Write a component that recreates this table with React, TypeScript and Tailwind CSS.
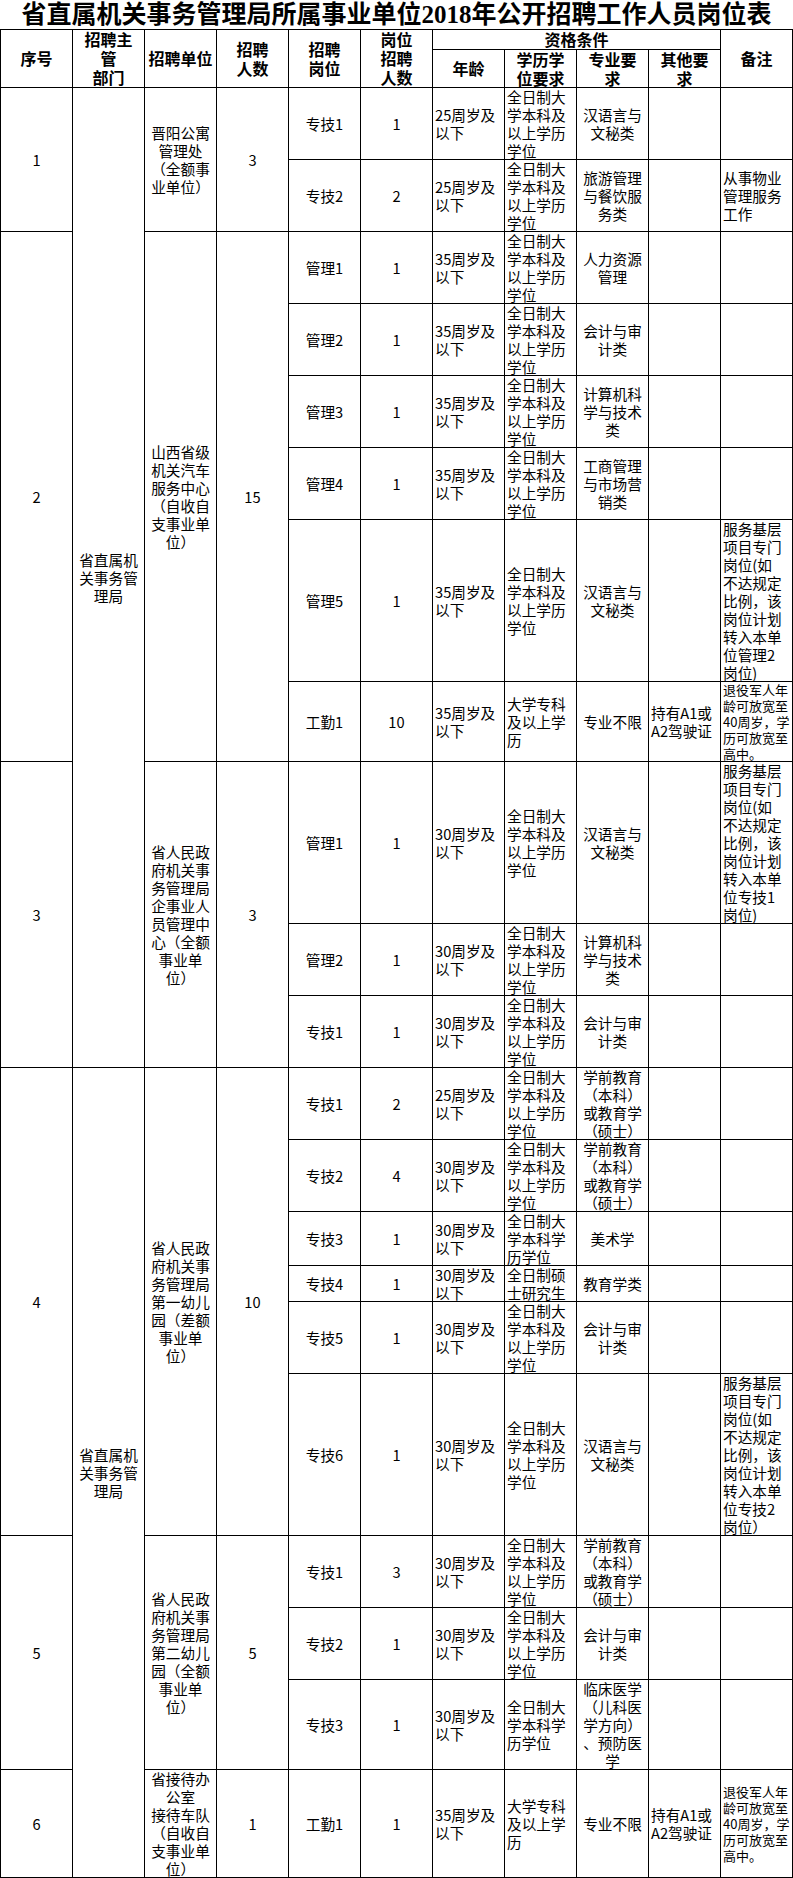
import React from 'react';

type Post = {
  name: string;
  count: string;
  age: string;
  edu: string;
  major: string;
  other?: string;
  note?: string;
  noteSmall?: boolean;
};

type Group = {
  no: string;
  dept?: number;
  unit: string;
  total: string;
  posts: Post[];
};

const AGE25 = '25周岁及\n以下';
const AGE30 = '30周岁及\n以下';
const AGE35 = '35周岁及\n以下';
const EDU = '全日制大\n学本科及\n以上学历\n学位';
const EDU_BK = '全日制大\n学本科学\n历学位';
const EDU_ZK = '大学专科\n及以上学\n历';
const PRESCHOOL = '学前教育\n（本科）\n或教育学\n（硕士）';
const DRIVER = '持有A1或\nA2驾驶证';
const VETERAN = '退役军人年\n龄可放宽至\n40周岁，学\n历可放宽至\n高中。';
const grassroots = (tail: string, close: string) =>
  `服务基层\n项目专门\n岗位(如\n不达规定\n比例，该\n岗位计划\n转入本单\n${tail}\n岗位${close}`;

const DEPT = '省直属机\n关事务管\n理局';

const GROUPS: Group[] = [
  {
    no: '1', dept: 11, unit: '晋阳公寓\n管理处\n（全额事\n业单位）', total: '3',
    posts: [
      { name: '专技1', count: '1', age: AGE25, edu: EDU, major: '汉语言与\n文秘类' },
      { name: '专技2', count: '2', age: AGE25, edu: EDU, major: '旅游管理\n与餐饮服\n务类', note: '从事物业\n管理服务\n工作' },
    ],
  },
  {
    no: '2', unit: '山西省级\n机关汽车\n服务中心\n（自收自\n支事业单\n位）', total: '15',
    posts: [
      { name: '管理1', count: '1', age: AGE35, edu: EDU, major: '人力资源\n管理' },
      { name: '管理2', count: '1', age: AGE35, edu: EDU, major: '会计与审\n计类' },
      { name: '管理3', count: '1', age: AGE35, edu: EDU, major: '计算机科\n学与技术\n类' },
      { name: '管理4', count: '1', age: AGE35, edu: EDU, major: '工商管理\n与市场营\n销类' },
      { name: '管理5', count: '1', age: AGE35, edu: EDU, major: '汉语言与\n文秘类', note: grassroots('位管理2', ')') },
      { name: '工勤1', count: '10', age: AGE35, edu: EDU_ZK, major: '专业不限', other: DRIVER, note: VETERAN, noteSmall: true },
    ],
  },
  {
    no: '3', unit: '省人民政\n府机关事\n务管理局\n企事业人\n员管理中\n心（全额\n事业单\n位）', total: '3',
    posts: [
      { name: '管理1', count: '1', age: AGE30, edu: EDU, major: '汉语言与\n文秘类', note: grassroots('位专技1', ')') },
      { name: '管理2', count: '1', age: AGE30, edu: EDU, major: '计算机科\n学与技术\n类' },
      { name: '专技1', count: '1', age: AGE30, edu: EDU, major: '会计与审\n计类' },
    ],
  },
  {
    no: '4', dept: 10, unit: '省人民政\n府机关事\n务管理局\n第一幼儿\n园（差额\n事业单\n位）', total: '10',
    posts: [
      { name: '专技1', count: '2', age: AGE25, edu: EDU, major: PRESCHOOL },
      { name: '专技2', count: '4', age: AGE30, edu: EDU, major: PRESCHOOL },
      { name: '专技3', count: '1', age: AGE30, edu: EDU_BK, major: '美术学' },
      { name: '专技4', count: '1', age: AGE30, edu: '全日制硕\n士研究生', major: '教育学类' },
      { name: '专技5', count: '1', age: AGE30, edu: EDU, major: '会计与审\n计类' },
      { name: '专技6', count: '1', age: AGE30, edu: EDU, major: '汉语言与\n文秘类', note: grassroots('位专技2', '）') },
    ],
  },
  {
    no: '5', unit: '省人民政\n府机关事\n务管理局\n第二幼儿\n园（全额\n事业单\n位）', total: '5',
    posts: [
      { name: '专技1', count: '3', age: AGE30, edu: EDU, major: PRESCHOOL },
      { name: '专技2', count: '1', age: AGE30, edu: EDU, major: '会计与审\n计类' },
      { name: '专技3', count: '1', age: AGE30, edu: EDU_BK, major: '临床医学\n（儿科医\n学方向）\n、预防医\n学' },
    ],
  },
  {
    no: '6', unit: '省接待办\n公室\n接待车队\n（自收自\n支事业单\n位）', total: '1',
    posts: [
      { name: '工勤1', count: '1', age: AGE35, edu: EDU_ZK, major: '专业不限', other: DRIVER, note: VETERAN, noteSmall: true },
    ],
  },
];

// spans must be written out in full for tailwind
const ROW_SPAN: Record<number, string> = {
  1: 'row-span-1',
  2: 'row-span-2',
  3: 'row-span-3',
  6: 'row-span-6',
  10: 'row-span-10',
  11: 'row-span-11',
};

function Cell({ children, left, span = 1, className = '' }: {
  children?: React.ReactNode; left?: boolean; span?: number; className?: string;
}) {
  return (
    <div
      className={`${ROW_SPAN[span]} border-r border-b border-black flex items-center whitespace-pre overflow-visible ${
        left ? 'justify-start text-left pl-[2px]' : 'justify-center text-center'
      } ${className}`}
    >
      <div>{children}</div>
    </div>
  );
}

function HeadCell({ children, className = '' }: { children: React.ReactNode; className?: string }) {
  return (
    <div className={`border-r border-b border-black flex items-center justify-center text-center whitespace-pre font-bold text-[16px] leading-[19px] ${className}`}>
      <div>{children}</div>
    </div>
  );
}

export default function App() {
  const body: React.ReactNode[] = [];
  GROUPS.forEach((g) => {
    const n = g.posts.length;
    g.posts.forEach((p, i) => {
      const k = `${g.no}-${i}`;
      if (i === 0) {
        body.push(<Cell key={`${k}-no`} span={n}>{g.no}</Cell>);
        if (g.dept) body.push(<Cell key={`${k}-dept`} span={g.dept}>{DEPT}</Cell>);
        body.push(<Cell key={`${k}-unit`} span={n}>{g.unit}</Cell>);
        body.push(<Cell key={`${k}-total`} span={n}>{g.total}</Cell>);
      }
      body.push(<Cell key={`${k}-name`}>{p.name}</Cell>);
      body.push(<Cell key={`${k}-count`}>{p.count}</Cell>);
      body.push(<Cell key={`${k}-age`} left>{p.age}</Cell>);
      body.push(<Cell key={`${k}-edu`} left>{p.edu}</Cell>);
      body.push(<Cell key={`${k}-major`}>{p.major}</Cell>);
      body.push(<Cell key={`${k}-other`} left>{p.other}</Cell>);
      body.push(
        <Cell key={`${k}-note`} left className={p.noteSmall ? 'text-[13px] leading-[16px]' : ''}>
          {p.note}
        </Cell>
      );
    });
  });

  return (
    <div className="w-[793px] bg-white text-black font-['Noto_Sans_CJK_SC',sans-serif]">
      {/* Title */}
      <div className="h-[29px] flex items-center justify-center text-[25px] leading-[29px] font-semibold font-['Liberation_Serif','Noto_Sans_CJK_SC',serif] whitespace-nowrap">
        省直属机关事务管理局所属事业单位2018年公开招聘工作人员岗位表
      </div>

      {/* Table */}
      <div className="grid grid-cols-[repeat(11,72px)] grid-rows-[20px_38px_72px_72px_72px_72px_72px_72px_162px_80px_162px_72px_72px_72px_72px_54px_36px_72px_162px_72px_72px_90px_108px] border-l border-t border-black text-[14.67px] leading-[18px]">
        <HeadCell className="row-span-2">序号</HeadCell>
        <HeadCell className="row-span-2">{'招聘主\n管\n部门'}</HeadCell>
        <HeadCell className="row-span-2">招聘单位</HeadCell>
        <HeadCell className="row-span-2">{'招聘\n人数'}</HeadCell>
        <HeadCell className="row-span-2">{'招聘\n岗位'}</HeadCell>
        <HeadCell className="row-span-2">{'岗位\n招聘\n人数'}</HeadCell>
        <HeadCell className="col-span-4">资格条件</HeadCell>
        <HeadCell className="row-span-2">备注</HeadCell>
        <HeadCell>年龄</HeadCell>
        <HeadCell>{'学历学\n位要求'}</HeadCell>
        <HeadCell>{'专业要\n求'}</HeadCell>
        <HeadCell>{'其他要\n求'}</HeadCell>
        {body}
      </div>
    </div>
  );
}
